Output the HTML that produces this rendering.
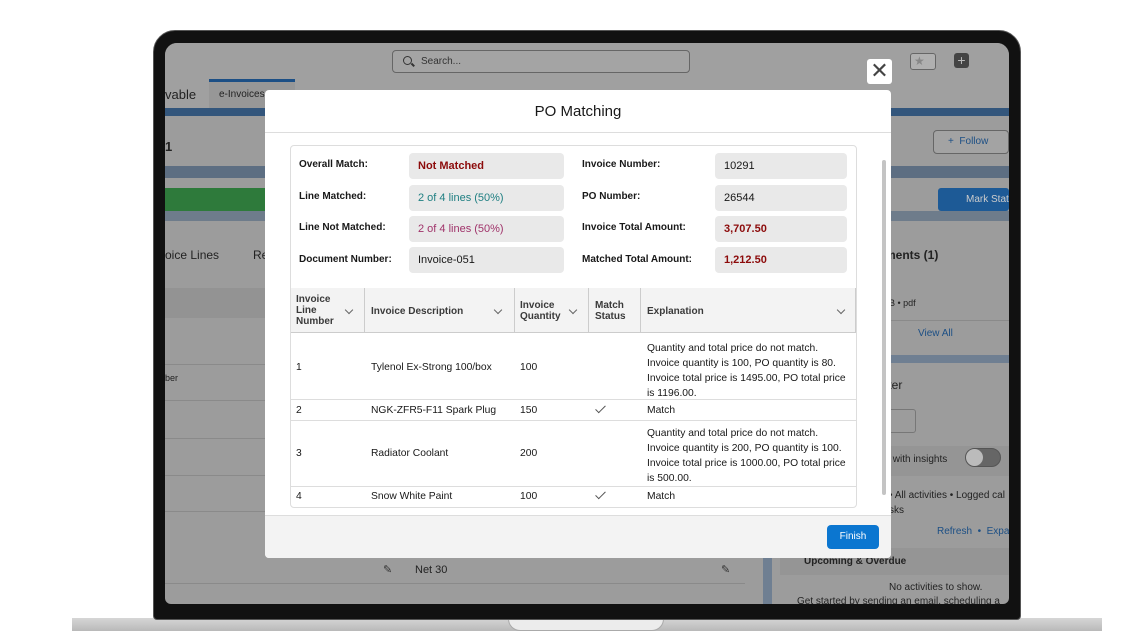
<!DOCTYPE html>
<html><head><meta charset="utf-8"><style>
*{margin:0;padding:0;box-sizing:border-box}
body{width:1121px;height:631px;background:#fff;position:relative;overflow:hidden;font-family:"Liberation Sans",sans-serif;color:#181818}
.a{position:absolute;white-space:nowrap}
.t{font-size:10.3px}
.lbl{font-size:10px;font-weight:bold}
.box{background:#e9e9e9;border-radius:4px;height:26px;font-size:11px;line-height:26px;padding-left:9px}
.th{font-size:10px;font-weight:bold;color:#3a3a3a;line-height:11px}
.chev{width:6px;height:6px;border-right:1.2px solid #666;border-bottom:1.2px solid #666;transform:rotate(45deg)}
.chk{width:5px;height:10px;border-right:1.3px solid #555;border-bottom:1.3px solid #555;transform:rotate(45deg)}
.bgline{background:#8a8a8a;height:1px}
</style></head><body>
<div class="a" style="left:72px;top:618px;width:1030px;height:13px;background:linear-gradient(#d6d6d6,#b9b9b9)"></div>
<div class="a" style="left:508px;top:618px;width:156px;height:13px;background:#ececec;border-radius:0 0 12px 12px;border:1px solid #aaa;border-top:none"></div>
<div class="a" style="left:153px;top:30px;width:868px;height:590px;background:#111;border-radius:22px 22px 4px 4px;border:1px solid #555"></div>
<div class="a" style="left:165px;top:43px;width:844px;height:561px;background:#9c9c9c;border-radius:12px 12px 6px 6px;overflow:hidden">
  <div class="a" style="left:0;top:0;width:844px;height:37px;background:#a0a0a0"></div>
  <div class="a" style="left:227px;top:7px;width:298px;height:23px;border:1px solid #666;border-radius:4px;background:#a4a4a4;font-size:10px;color:#333;line-height:21px;padding-left:28px">Search...</div>
  <div class="a" style="left:238px;top:13px;width:9px;height:9px;border:1.5px solid #333;border-radius:50%"></div>
  <div class="a" style="left:246px;top:21px;width:4px;height:1.5px;background:#333;transform:rotate(45deg)"></div>
  <div class="a" style="left:745px;top:10px;width:26px;height:17px;border:1px solid #666;background:#b0b0b0;border-radius:3px;font-size:12px;color:#888;line-height:15px;padding-left:3px">★</div>
  <div class="a" style="left:789px;top:10px;width:15px;height:15px;background:#444;border-radius:3px;color:#bbb;font-size:14px;line-height:14px;text-align:center">+</div>
  <div class="a" style="left:0;top:37px;width:844px;height:28px;background:#a0a0a0"></div>
  <div class="a" style="left:0;top:44px;font-size:13px;color:#222">vable</div>
  <div class="a" style="left:44px;top:36px;width:86px;height:29px;background:#979797;border-top:3px solid #1c4f85;font-size:10px;color:#222;padding:7px 10px">e-Invoices</div>
  <div class="a" style="left:0;top:65px;width:844px;height:8px;background:#33567c"></div>
  <div class="a" style="left:0;top:73px;width:844px;height:50px;background:#9c9c9c"></div>
  <div class="a" style="left:0;top:96px;font-size:13px;font-weight:bold;color:#222">1</div>
  <div class="a" style="left:768px;top:87px;width:76px;height:24px;border:1px solid #666;border-radius:4px;background:#a3a3a3;font-size:10px;color:#1c4f85;line-height:22px;padding-left:14px">+&nbsp; Follow</div>
  <div class="a" style="left:0;top:123px;width:844px;height:12px;background:#5d6e82"></div>
  <div class="a" style="left:0;top:145px;width:100px;height:23px;background:#2e7a3b"></div>
  <div class="a" style="left:773px;top:145px;width:71px;height:23px;background:#1d5a96;border-radius:3px;color:#ccc;font-size:10px;line-height:23px;padding-left:28px">Mark Stat</div>
  <div class="a" style="left:0;top:168px;width:844px;height:10px;background:#6e7c8b"></div>
  <div class="a" style="left:0;top:205px;font-size:12px;color:#222">oice Lines</div>
  <div class="a" style="left:88px;top:205px;font-size:12px;color:#222">Re</div>
  <div class="a" style="left:0;top:245px;width:100px;height:30px;background:#939393"></div>
  <div class="a" style="left:0;top:330px;font-size:9px;color:#222">ber</div>
  <div class="a bgline" style="left:0;top:321px;width:100px"></div>
  <div class="a bgline" style="left:0;top:357px;width:100px"></div>
  <div class="a bgline" style="left:0;top:395px;width:100px"></div>
  <div class="a bgline" style="left:0;top:432px;width:100px"></div>
  <div class="a bgline" style="left:0;top:468px;width:100px"></div>
  <div class="a bgline" style="left:0;top:540px;width:580px"></div>
  <div class="a" style="left:250px;top:521px;font-size:11px;color:#222">Net 30</div>
  <div class="a" style="left:218px;top:520px;font-size:11px;color:#333">✎</div>
  <div class="a" style="left:556px;top:520px;font-size:11px;color:#333">✎</div>
  <div class="a" style="left:598px;top:75px;width:9px;height:486px;background:#6f7f92"></div>
  <div class="a" style="left:720px;top:205px;font-size:12px;font-weight:bold;color:#222">ments (1)</div>
  <div class="a" style="left:724px;top:255px;font-size:9px;color:#222">B • pdf</div>
  <div class="a bgline" style="left:607px;top:277px;width:237px"></div>
  <div class="a" style="left:753px;top:285px;font-size:10px;color:#1c4f85">View All</div>
  <div class="a" style="left:607px;top:312px;width:237px;height:8px;background:#6f7f92"></div>
  <div class="a" style="left:720px;top:335px;font-size:12px;color:#222">tter</div>
  <div class="a" style="left:723px;top:366px;width:28px;height:24px;border:1px solid #777;border-radius:3px"></div>
  <div class="a" style="left:607px;top:403px;width:237px;height:30px;background:#959595"></div>
  <div class="a" style="left:720px;top:411px;font-size:10px;color:#222">s with insights</div>
  <div class="a" style="left:800px;top:405px;width:36px;height:19px;border-radius:10px;background:#666;border:1px solid #555"></div>
  <div class="a" style="left:801px;top:406px;width:17px;height:17px;border-radius:50%;background:#bbb"></div>
  <div class="a" style="left:724px;top:447px;font-size:10px;color:#222">• All activities • Logged cal</div>
  <div class="a" style="left:724px;top:462px;font-size:10px;color:#222">sks</div>
  <div class="a" style="left:772px;top:483px;font-size:10px;color:#1c4f85">Refresh &nbsp;• &nbsp;Expa</div>
  <div class="a" style="left:615px;top:505px;width:229px;height:27px;background:#959595;font-size:10px;font-weight:bold;color:#222;line-height:27px;padding-left:24px">Upcoming &amp; Overdue</div>
  <div class="a" style="left:724px;top:539px;font-size:10px;color:#222">No activities to show.</div>
  <div class="a" style="left:632px;top:553px;font-size:10px;color:#222">Get started by sending an email, scheduling a</div>
</div>
<div class="a" style="left:867px;top:59px;width:25px;height:25px;background:#fff;border-radius:3px;font-size:22px;line-height:24px;text-align:center;color:#444">✕</div>
<div class="a" style="left:265px;top:90px;width:626px;height:468px;background:#fff;border-radius:4px;overflow:hidden">
  <div class="a" style="left:0;top:0;width:626px;height:43px;border-bottom:1.5px solid #ddd;text-align:center;font-size:15px;line-height:43px;color:#181818">PO Matching</div>
  <div class="a" style="left:0;top:425px;width:626px;height:43px;background:#f3f3f3;border-top:1px solid #ddd"></div>
  <div class="a" style="left:562px;top:435px;width:52px;height:24px;background:#0b76d0;border-radius:4px;color:#fff;font-size:10px;text-align:center;line-height:24px">Finish</div>
  <div class="a" style="left:617px;top:70px;width:4px;height:335px;background:#c4c4c4;border-radius:2px"></div>
</div>
<div class="a" style="left:290px;top:145px;width:567px;height:363px;border:1px solid #ddd;border-radius:4px;background:#fff"></div>
<div class="a lbl" style="left:299px;top:159px">Overall Match:</div>
<div class="a lbl" style="left:299px;top:191px">Line Matched:</div>
<div class="a lbl" style="left:299px;top:222px">Line Not Matched:</div>
<div class="a lbl" style="left:299px;top:254px">Document Number:</div>
<div class="a box" style="left:409px;top:153px;width:155px;color:#8c0b0b;font-weight:bold">Not Matched</div>
<div class="a box" style="left:409px;top:185px;width:155px;color:#1f7f82">2 of 4 lines (50%)</div>
<div class="a box" style="left:409px;top:216px;width:155px;color:#a0336a">2 of 4 lines (50%)</div>
<div class="a box" style="left:409px;top:247px;width:155px">Invoice-051</div>
<div class="a lbl" style="left:582px;top:159px">Invoice Number:</div>
<div class="a lbl" style="left:582px;top:191px">PO Number:</div>
<div class="a lbl" style="left:582px;top:222px">Invoice Total Amount:</div>
<div class="a lbl" style="left:582px;top:254px">Matched Total Amount:</div>
<div class="a box" style="left:715px;top:153px;width:132px">10291</div>
<div class="a box" style="left:715px;top:185px;width:132px">26544</div>
<div class="a box" style="left:715px;top:216px;width:132px;color:#8c0b0b;font-weight:bold">3,707.50</div>
<div class="a box" style="left:715px;top:247px;width:132px;color:#8c0b0b;font-weight:bold">1,212.50</div>
<div class="a" style="left:291px;top:288px;width:565px;height:45px;background:#f3f3f3;border-bottom:1px solid #ccc"></div>
<div class="a" style="left:364px;top:288px;width:1px;height:45px;background:#ccc"></div>
<div class="a" style="left:514px;top:288px;width:1px;height:45px;background:#ccc"></div>
<div class="a" style="left:588px;top:288px;width:1px;height:45px;background:#ccc"></div>
<div class="a" style="left:640px;top:288px;width:1px;height:45px;background:#ccc"></div>
<div class="a" style="left:855px;top:288px;width:1px;height:45px;background:#ccc"></div>
<div class="a th" style="left:296px;top:294px">Invoice<br>Line<br>Number</div>
<div class="a chev" style="left:346px;top:307px"></div>
<div class="a th" style="left:371px;top:306px">Invoice Description</div>
<div class="a chev" style="left:495px;top:307px"></div>
<div class="a th" style="left:520px;top:300px">Invoice<br>Quantity</div>
<div class="a chev" style="left:570px;top:307px"></div>
<div class="a th" style="left:595px;top:300px">Match<br>Status</div>
<div class="a th" style="left:647px;top:306px">Explanation</div>
<div class="a chev" style="left:838px;top:307px"></div>
<div class="a" style="left:291px;top:399px;width:565px;height:1px;background:#ddd"></div>
<div class="a" style="left:291px;top:420px;width:565px;height:1px;background:#ddd"></div>
<div class="a" style="left:291px;top:486px;width:565px;height:1px;background:#ddd"></div>
<div class="a t" style="left:296px;top:362px">1</div>
<div class="a t" style="left:371px;top:362px">Tylenol Ex-Strong 100/box</div>
<div class="a t" style="left:520px;top:362px">100</div>
<div class="a t" style="left:647px;top:341px;line-height:15px">Quantity and total price do not match.<br>Invoice quantity is 100, PO quantity is 80.<br>Invoice total price is 1495.00, PO total price<br>is 1196.00.</div>
<div class="a t" style="left:296px;top:405px">2</div>
<div class="a t" style="left:371px;top:405px">NGK-ZFR5-F11 Spark Plug</div>
<div class="a t" style="left:520px;top:405px">150</div>
<div class="a chk" style="left:598px;top:403px"></div>
<div class="a t" style="left:647px;top:405px">Match</div>
<div class="a t" style="left:296px;top:448px">3</div>
<div class="a t" style="left:371px;top:448px">Radiator Coolant</div>
<div class="a t" style="left:520px;top:448px">200</div>
<div class="a t" style="left:647px;top:426px;line-height:15px">Quantity and total price do not match.<br>Invoice quantity is 200, PO quantity is 100.<br>Invoice total price is 1000.00, PO total price<br>is 500.00.</div>
<div class="a t" style="left:296px;top:491px">4</div>
<div class="a t" style="left:371px;top:491px">Snow White Paint</div>
<div class="a t" style="left:520px;top:491px">100</div>
<div class="a chk" style="left:598px;top:489px"></div>
<div class="a t" style="left:647px;top:491px">Match</div>
</body></html>
